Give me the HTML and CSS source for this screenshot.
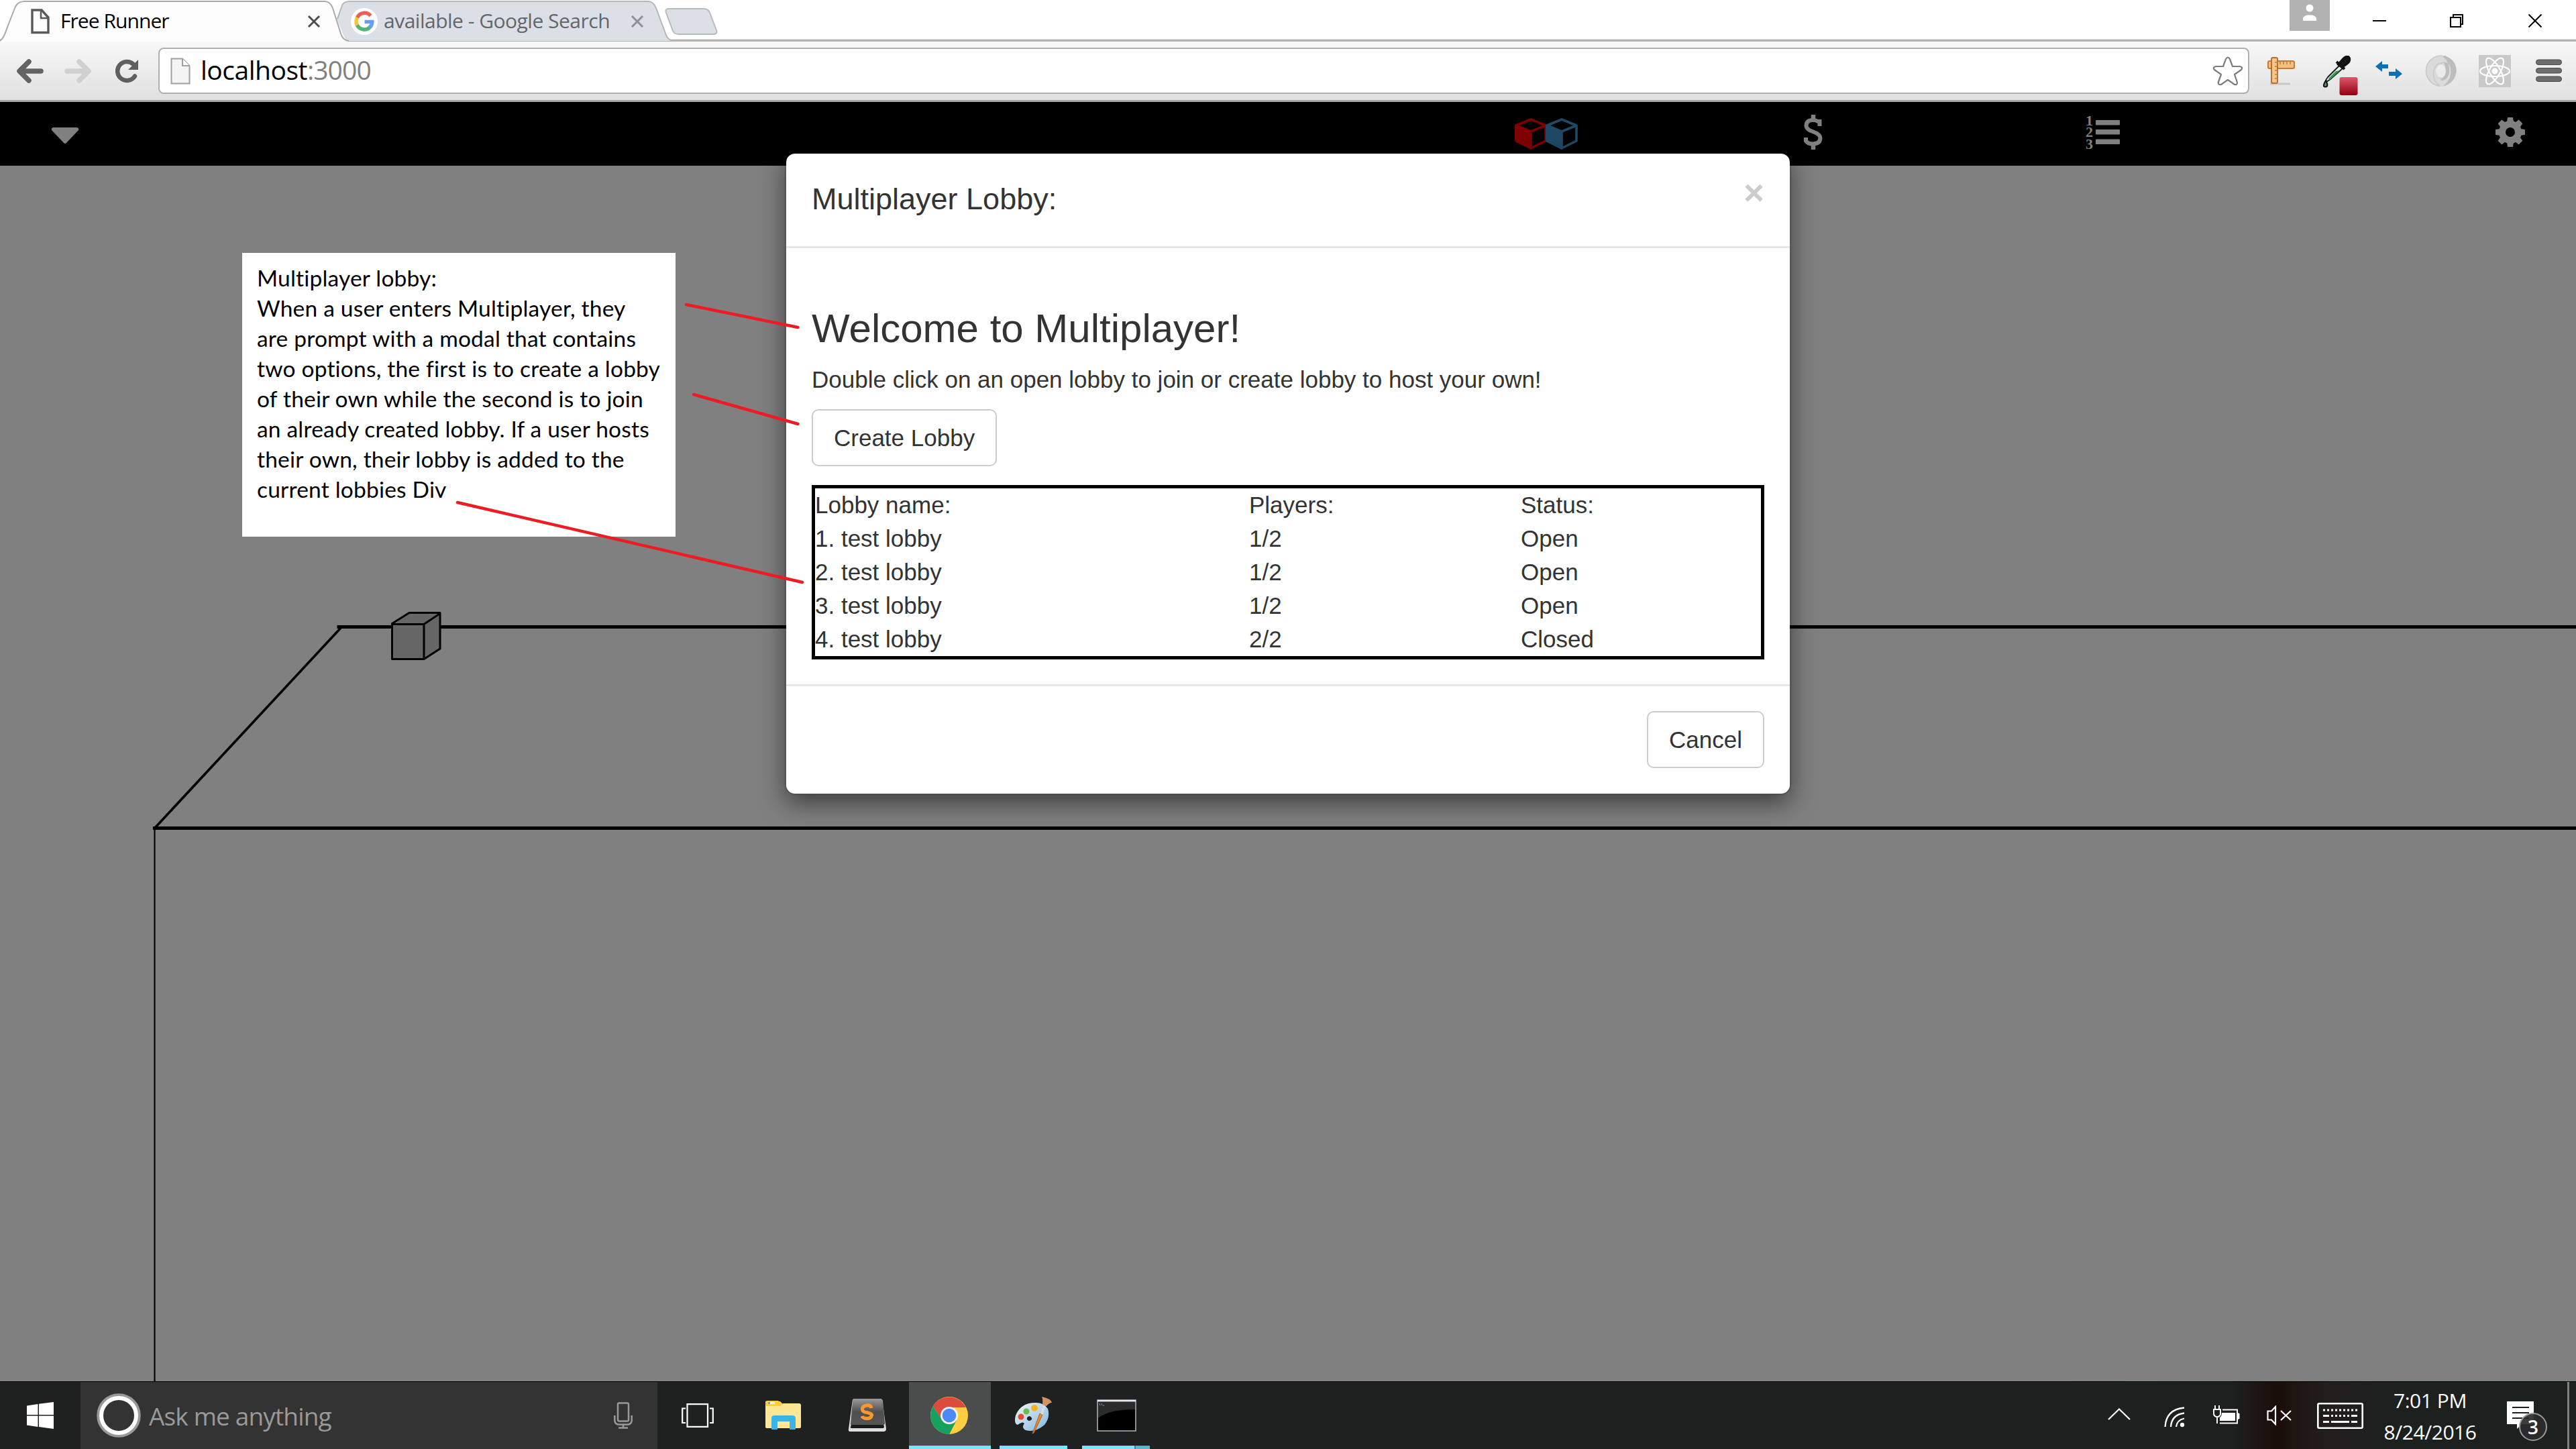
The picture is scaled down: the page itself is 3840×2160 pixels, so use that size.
FILE: index.html
```html
<!DOCTYPE html>
<html lang="en">
<head>
<meta charset="utf-8">
<title>Free Runner</title>
<link rel="stylesheet" href="styles.css">
</head>
<body>
<div class="desktop">

  <header class="tabstrip">
    <div class="tab tab-active">
      <svg class="tab-shape" width="530" height="62" viewBox="0 0 530 62"><path d="M-2 62C6 58 8 48 12 38L22 12Q26 2 36 2H484Q492 2 496 12L508 50Q511 60 520 61V62Z" fill="#fdfdfd"/><path d="M-2 62C6 58 8 48 12 38L22 12Q26 2 36 2H484Q492 2 496 12L508 50Q511 60 520 61" fill="none" stroke="#a9a9a9" stroke-width="2"/></svg>
      <svg class="tab-page" width="28" height="38" viewBox="0 0 28 38" fill="none" stroke="#5a5a5a" stroke-width="3.4"><path d="M2 2H16L26 13V35.500H2Z"/><path d="M15 2V14H26" stroke-width="2.500"/></svg>
      <span class="tab-title tight">Free Runner</span>
      <svg class="tab-close" width="20" height="20" viewBox="0 0 20 20" stroke="#4d4d4d" stroke-width="3"><path d="M2 2L18 18M18 2L2 18"/></svg>
    </div>
    <div class="tab tab-second">
      <svg class="tab-shape" width="505" height="62" viewBox="0 0 505 62"><path d="M0 28L8 8Q10 2 20 2H464Q472 2 476 12L490 50Q493 60 502 61H18Q12 60 9 50Z" fill="#dbdfe6"/><path d="M1 28L8 8Q10 2 20 2H464Q472 2 476 12L490 50Q493 60 502 61" fill="none" stroke="#b4b6b9" stroke-width="2"/></svg>
      <svg class="google" width="40" height="40" viewBox="0 0 40 40" fill="none"><circle cx="20" cy="20" r="20" fill="#fff"/><g stroke-width="5.500"><path d="M29.500 11.500A12 12 0 0 0 9.400 14.500" stroke="#ea5f55"/><path d="M9.600 14A12.500 12.500 0 0 0 9.600 26" stroke="#fbc32d"/><path d="M9.400 25.500A12 12 0 0 0 28.500 28.500" stroke="#53b573"/><path d="M28 29Q32 25 31.800 20.500H20.500" stroke="#6b9cf3"/></g></svg>
      <span class="tab-title">available - Google Search</span>
      <svg class="tab-close" width="20" height="20" viewBox="0 0 20 20" stroke="#8d8f92" stroke-width="3"><path d="M2 2L18 18M18 2L2 18"/></svg>
    </div>
    <svg class="newtab" width="82" height="42" viewBox="0 0 82 42"><path d="M7 2H59Q66 2 68 8L78 34Q80 40 73 40H22Q15 40 13 35L3 8Q1 2 7 2Z" fill="#dbdfe6" stroke="#b9babd" stroke-width="2"/></svg>
    <div class="window-buttons">
      <div class="avatar"><svg width="20" height="28" viewBox="0 0 20 28" fill="#fff"><circle cx="10" cy="7" r="5.500"/><path d="M0 26V22Q2 18 7 17.500H13Q18 18 20 22V26Z"/></svg></div>
      <svg class="minimise" width="20" height="20" viewBox="0 0 20 20"><path d="M0 10H20" stroke="#000" stroke-width="2"/></svg>
      <svg class="restore" width="20" height="20" viewBox="0 0 20 20" fill="none" stroke="#000" stroke-width="2"><path d="M1 5H16V19H1ZM5 5V1H19V15H16"/></svg>
      <svg class="shut" width="20" height="20" viewBox="0 0 20 20" stroke="#000" stroke-width="2"><path d="M.5.5L19.500 19.500M19.500.5L.5 19.500"/></svg>
    </div>
  </header>

  <div class="toolbar">
    <svg class="back" width="42" height="36" viewBox="0 0 42 36" fill="none" stroke="#636363" stroke-width="7.500" stroke-linecap="round" stroke-linejoin="round"><path d="M19 4L5 18L19 32M6 18H37"/></svg>
    <svg class="forward" width="42" height="36" viewBox="0 0 42 36" fill="none" stroke="#d0d0d0" stroke-width="7.500" stroke-linecap="round" stroke-linejoin="round"><path d="M23 4L37 18L23 32M36 18H5"/></svg>
    <svg class="reload" width="38" height="36" viewBox="0 0 38 36"><path d="M30 25.500A14 14 0 1 1 28 8" fill="none" stroke="#5f5f5f" stroke-width="6.500" stroke-linecap="round"/><path d="M35 1V16H20Z" fill="#5f5f5f"/></svg>
    <div class="omnibox">
      <svg width="30" height="40" viewBox="0 0 30 40" fill="#f4f4f5" stroke="#a0a0a0" stroke-width="2"><path d="M1.500 1.500H18L28.500 12V38.500H1.500Z"/><path d="M18 1.500V12H28.500" fill="#fff"/></svg>
      <span class="url">localhost<span class="port">:3000</span></span>
      <svg class="star" width="46" height="44" viewBox="0 0 46 44" fill="#fff" stroke="#7d7d7d" stroke-width="2.200" stroke-linejoin="round"><path d="M20 4Q23 -1 26 4L30 15H41Q46 16 43 20L33 27L37 39Q37 43 33 42L23 35L13 42Q8 43 9 38L13 27L3 20Q0 16 5 15H16Z"/></svg>
    </div>
    <svg class="ext ruler" width="42" height="42" viewBox="0 0 42 42"><path d="M4 40H34" stroke="#c8c8c8" stroke-width="3"/><rect x="1" y="6" width="39" height="11" rx="2" fill="#f5bf83" stroke="#c77a34" stroke-width="2"/><rect x="6" y="1" width="9" height="38" rx="2" fill="#f8c68d" stroke="#bd702c" stroke-width="2"/><path d="M11 8H15M11 14H15M11 20H15M11 26H15M11 32H15M19 7V11M24 7V11M29 7V11M34 7V11" stroke="#c07c3a" stroke-width="1.500"/></svg>
    <svg class="ext dropper" width="53" height="60" viewBox="0 0 53 60"><path d="M26 14L8 32Q4 37 6 39L12 35L30 19" fill="#e8eee9" stroke="#222" stroke-width="2"/><path d="M20 23L9 34L11 36L26 22Z" fill="#2d9a4d"/><path d="M21 9L33 20M24 13L32 4Q38 -1 40 4Q41 9 36 12L29 17Z" fill="#161616" stroke="#111" stroke-width="4"/><path d="M5 37Q-1 47 4.500 46.500Q10 46 5 37Z" fill="#4f9a5f" stroke="#111" stroke-width="2"/><defs><linearGradient id="red" x2="0" y2="1"><stop stop-color="#e0566a"/><stop offset="1" stop-color="#8d0010"/></linearGradient></defs><rect x="25.500" y="32" width="27" height="27" rx="3" fill="url(#red)"/></svg>
    <svg class="ext swap" width="42" height="30" viewBox="0 0 42 30" fill="#0c70b4"><path d="M1 8L11 0V5H20V11H11V16ZM41 19L31 11V16H21V22H31V27Z"/></svg>
    <svg class="ext ring" width="48" height="48" viewBox="0 0 48 48" fill="none"><circle cx="24" cy="24" r="15.500" stroke="#dadada" stroke-width="15"/><path d="M26 1A22.500 22.500 0 0 0 22 46Q10 38 13 23Q16 12 26 11Q20 17 20 25Q20 33 27 38" stroke="#c9c9c9" stroke-width="1.500"/><path d="M30 1Q47 8 46.500 24Q44 42 27 46.500Q41 35 38 19Q36 11 27 10Q31 16 30 24Q29 32 23 38Q34 38 36 26Q37 10 26 2Z" fill="#bdbdbd"/><ellipse cx="24" cy="24" rx="7" ry="10" fill="#ebebeb"/></svg>
    <svg class="ext react" width="48" height="48" viewBox="0 0 48 48"><rect width="48" height="48" fill="#c9c9c9"/><g fill="none" stroke="#fff" stroke-width="2.200"><ellipse cx="24" cy="24" rx="22" ry="8"/><ellipse cx="24" cy="24" rx="22" ry="8" transform="rotate(60 24 24)"/><ellipse cx="24" cy="24" rx="22" ry="8" transform="rotate(120 24 24)"/></g><circle cx="24" cy="24" r="4.500" fill="#fff"/></svg>
    <svg class="ext menu" width="39" height="36" viewBox="0 0 39 36" fill="#6d6d6d" stroke="#4b4b4b" stroke-width="1"><rect x=".5" y="1" width="38" height="7.500" rx="3.500"/><rect x=".5" y="13.500" width="38" height="7.500" rx="3.500"/><rect x=".5" y="26" width="38" height="7.500" rx="3.500"/></svg>
  </div>

  <nav class="navbar">
    <svg class="caret" width="42" height="24" viewBox="0 0 42 24"><path d="M3 0H39Q42 1 41 4L23 23Q21 25 19 23L1 4Q0 1 3 0Z" fill="#808080"/></svg>
    <svg class="cubes" width="94" height="48" viewBox="0 0 94 48"><g stroke-width="3.600" stroke-linejoin="round"><path d="M2 11L24 2L46 11V34L24 45L2 34Z" fill="none" stroke="#800000"/><path d="M2 11L24 20V45L2 34Z" fill="#800000" stroke="#800000"/><path d="M24 20L46 11" stroke="#800000"/><path d="M48 11L70 2L92 11V34L70 45L48 34Z" fill="none" stroke="#1f4a66"/><path d="M48 11L70 20V45L48 34Z" fill="#1f4a66" stroke="#1f4a66"/><path d="M70 20L92 11" stroke="#1f4a66"/></g></svg>
    <svg class="dollar" width="28" height="52" viewBox="0 0 28 52" fill="none" stroke="#808080"><path d="M23.500 17V10H21Q18 8 13.500 8Q4 8 3.500 16Q3.500 22 13 25Q24.500 29 24.500 35Q24 43.500 13 43.500Q6 43.500 3 39V34" stroke-width="6"/><path d="M14 0V9M14 43V52" stroke-width="6.500"/></svg>
    <div class="ranking">
      <div class="digits"><span>1</span><span>2</span><span>3</span></div>
      <svg width="36" height="36" viewBox="0 0 36 36" fill="#808080"><rect width="36" height="7.500" rx="1"/><rect y="14" width="36" height="7.500" rx="1"/><rect y="28.500" width="36" height="7.500" rx="1"/></svg>
    </div>
    <svg class="gear" width="44" height="44" viewBox="-22 -22 44 44"><circle r="12" fill="none" stroke="#808080" stroke-width="10"/><g fill="#808080"><path id="tooth" d="M-5 -15L-4 -22H4L5 -15Z"/><use href="#tooth" transform="rotate(45)"/><use href="#tooth" transform="rotate(90)"/><use href="#tooth" transform="rotate(135)"/><use href="#tooth" transform="rotate(180)"/><use href="#tooth" transform="rotate(225)"/><use href="#tooth" transform="rotate(270)"/><use href="#tooth" transform="rotate(315)"/></g></svg>
  </nav>

  <main class="scene">
    <svg width="3840" height="1812" viewBox="0 247 3840 1812" fill="none" stroke="#000">
      <path d="M502.500 934.500H3840M228 1234.500H3840" stroke-width="5"/>
      <path d="M508 936L231 1234" stroke-width="3.600"/>
      <path d="M230.500 1235V2059" stroke-width="2.200"/>
      <g fill="#666" stroke-width="3" stroke-linejoin="round"><path d="M584.500 929.500L610 913.500H656V967L632 982.500H584.500Z"/><path d="M584.500 930.500H632V982.500M632 930.500L656 914.500"/></g>
    </svg>
  </main>

  <footer class="taskbar">
    <div class="start"><svg width="40" height="40" viewBox="0 0 40 40" fill="#fff"><path d="M0 5.500L16.500 3V19H0ZM18 2.800L40 0V19H18ZM0 20.500H16.500V37L0 34.500ZM18 20.500H40V40L18 37Z"/></svg></div>
    <div class="search">
      <svg width="66" height="66" viewBox="0 0 66 66" fill="none"><circle cx="33" cy="33" r="30.500" stroke="#999" stroke-width="4.500"/><circle cx="33" cy="33" r="26" stroke="#fff" stroke-width="6"/></svg>
      <span class="ask">Ask me anything</span>
      <svg class="mic" width="28" height="40" viewBox="0 0 28 40" fill="none" stroke="#999" stroke-width="2.500"><rect x="6" y="1.500" width="16" height="27" rx="2"/><path d="M1.300 20V28Q2 33.500 8 33.500H20Q26 33.500 26.700 28V20M14 34V38M7 38.500H21"/></svg>
    </div>
    <div class="app taskview"><svg width="48" height="36" viewBox="0 0 48 36" fill="none" stroke="#fff" stroke-width="2.200"><path d="M8.500 1.200H39V34.800H8.500ZM6 7.500H1.200V29H6M42 7.500H46.800V29H42"/></svg></div>
    <div class="app folder"><svg width="54" height="46" viewBox="0 0 54 46"><path d="M0 3Q0 1 3 1H19L26 8H0Z" fill="#ffce3d"/><path d="M0 9H21L26 5H50Q53 5 53 8V40Q53 42 51 42H3Q0 42 0 40Z" fill="#ffe693"/><path d="M0 9H21L26 6L22 2H0Z" fill="#ffce3d"/><path d="M4 4.500H14" stroke="#fff" stroke-width="2.500"/><path d="M4 4.500H7" stroke="#27b1c7" stroke-width="2.500"/><path d="M9 44V27Q9 23 14 23H40Q45 23 45 27V44H36V32H18V44Z" fill="#3bb3e6"/></svg></div>
    <div class="app sublime"><svg width="58" height="52" viewBox="0 0 58 52"><defs><linearGradient id="key" x2="0" y2="1"><stop stop-color="#9a9a9a"/><stop offset=".5" stop-color="#505050"/><stop offset="1" stop-color="#555"/></linearGradient></defs><path d="M7 2H51L57 46Q57 50 53 50H4Q0 50 1 46Z" fill="#dedede"/><path d="M5 39H53L54 43Q54 45 52 45H6Q3 45 4 43Z" fill="#1b1b1b"/><path d="M9 1H49Q51 1 52 4L55 38Q55 40 52 40H6Q3 40 4 38L7 4Q7 1 9 1Z" fill="url(#key)"/><path d="M35 15Q34 10 28 11Q21 12 21.500 17Q22 21 28 21.500Q36 23 35.500 26Q34 31 28 30.500Q22 30 21 27" fill="none" stroke="#ff962e" stroke-width="5"/></svg></div>
    <div class="app chrome"><svg width="56" height="56" viewBox="-28 -28 56 56"><circle r="28" fill="#ffcd41"/><path d="M0 0L-24.200 -14A28 28 0 0 1 24.300 -12H0Z" fill="#dd4b3e"/><path d="M-24.200 -14A28 28 0 0 0 0 28L11 7L0 0L-11 6Z" fill="#17a15f"/><path d="M-24.200 -14L-11 6L0 -13H24.200A28 28 0 0 0 -24.200 -14Z" fill="#dd4b3e"/><path d="M0 28L11 6L0 12Z" fill="#17a15f"/><circle r="13" fill="#f4f4f4"/><circle r="10.300" fill="#4b8af4"/></svg><i class="underline"></i></div>
    <div class="app paint"><svg width="56" height="56" viewBox="0 0 56 56"><defs><linearGradient id="pal" x2="1" y2="1"><stop stop-color="#f2f7fb"/><stop offset="1" stop-color="#7cb6dc"/></linearGradient></defs><path d="M32 9Q9 9 2 28Q-1 40 5 42Q13 36 15 40Q10 46 17 50Q31 54 45 42Q54 31 50 18Q44 9 32 9ZM23 29Q27 31 26 34Q22 38 19 34Q18 30 23 29Z" fill="url(#pal)" fill-rule="evenodd"/><circle cx="10" cy="30" r="4.500" fill="#e8492f"/><circle cx="18" cy="22" r="4.500" fill="#6bbd45"/><circle cx="30" cy="17" r="5" fill="#fdb022"/><path d="M27 55L38 25L42 27L29 54Z" fill="#e98b2a" stroke="#b15e13"/><path d="M39 25L43 12L47 14L42 27Z" fill="#d5dde3"/><path d="M42 12Q43 4 41 0Q55 3 56 9Q52 9 48 14Z" fill="#ce9461"/></svg><i class="underline"></i></div>
    <div class="app cmd"><svg width="59" height="48" viewBox="0 0 59 48"><rect x="1" y="1" width="57" height="46" fill="#000" stroke="#a9afb8" stroke-width="1.600"/><path d="M2 28Q18 15 57 15V4H2Z" fill="#2b2b2b"/><path d="M1 2.200H58" stroke="#e8eaee" stroke-width="2.600"/><path d="M4 6L5 9M7 6L8 9M9 9H11" stroke="#aaa" stroke-width=".8"/></svg><i class="underline"></i></div>
    <div class="tray">
      <svg class="chevron" width="34" height="18" viewBox="0 0 34 18" fill="none" stroke="#fff" stroke-width="2.200"><path d="M1 17L17 1.500L33 17"/></svg>
      <svg class="wifi" width="31" height="31" viewBox="0 0 31 31" fill="none" stroke="#fff" stroke-width="2.300"><path d="M1.500 30Q3 4 30 1.500M10 30Q11 12 30 9.500M18 30Q19 20 30 17.500"/><circle cx="27" cy="27" r="2" fill="#fff"/></svg>
      <svg class="battery" width="40" height="28" viewBox="0 0 40 28" fill="none" stroke="#fff" stroke-width="2"><path d="M14 6.500H36V26.500H10M37 11V21"/><path d="M13 11H33V23H10V18Q13 16 13 11Z" fill="#fff" stroke="none"/><path d="M38 12V20" stroke-width="3"/><path d="M3 0V6M9 0V6M1 6H11V13Q10 17 6 17Q2 17 1 13ZM6 17V27"/></svg>
      <svg class="mute" width="37" height="30" viewBox="0 0 37 30" fill="none" stroke="#fff" stroke-width="2.200"><path d="M1.500 8.500H7L13 2V28L7 21.500H1.500ZM21 8L36 22M36 8L21 22"/></svg>
      <svg class="keyboard" width="69" height="39" viewBox="0 0 69 39" fill="none" stroke="#fff" stroke-width="2.600"><rect x="1.300" y="1.300" width="66.400" height="36.400" rx="2"/><path d="M9 11H60" stroke-width="3" stroke-dasharray="3 3"/><path d="M9 19.500H18M51 19.500H60" stroke-width="3"/><path d="M21 19.500H48" stroke-width="3" stroke-dasharray="3 3"/><path d="M9 28.500H18M21 28.500H48M51 28.500H60" stroke-width="3"/></svg>
      <div class="clock"><span>7:01 PM</span><span>8/24/2016</span></div>
      <div class="notify">
        <svg width="42" height="42" viewBox="0 0 42 42"><path d="M0 0H40V34H22L15 41V34H0Z" fill="#fff"/><path d="M8 9H33M8 17H33M8 25H33" stroke="#1c201f" stroke-width="2"/></svg>
        <span class="badge">3</span>
      </div>
      <div class="show-desktop"></div>
    </div>
  </footer>

  <section class="modal">
    <div class="modal-header"><h4>Multiplayer Lobby:</h4><span class="dismiss">×</span></div>
    <div class="modal-body">
      <h3>Welcome to Multiplayer!</h3>
      <p>Double click on an open lobby to join or create lobby to host your own!</p>
      <button class="btn">Create Lobby</button>
      <div class="lobbies">
        <span>Lobby name:</span><span>Players:</span><span>Status:</span>
        <span>1. test lobby</span><span>1/2</span><span>Open</span>
        <span>2. test lobby</span><span>1/2</span><span>Open</span>
        <span>3. test lobby</span><span>1/2</span><span>Open</span>
        <span>4. test lobby</span><span>2/2</span><span>Closed</span>
      </div>
    </div>
    <div class="modal-footer"><button class="btn">Cancel</button></div>
  </section>

  <aside class="note">Multiplayer lobby:<br>When a user enters Multiplayer, they<br>are prompt with a modal that contains<br>two options, the first is to create a lobby<br>of their own while the second is to join<br>an already created lobby. If a user hosts<br>their own, their lobby is added to the<br>current lobbies Div</aside>
  <svg class="pointers" width="3840" height="2160" viewBox="0 0 3840 2160" stroke="#ed1c24" stroke-width="4.500" stroke-linecap="round"><path d="M1023 454L1189.500 488M1034 588L1189.500 632M682 749L1196 868"/></svg>
</div>
</body>
</html>
```
FILE: styles.css
```css
* { box-sizing: border-box; }
body { margin: 0; }
svg { display: block; flex: none; }

.desktop {
  position: relative;
  display: flex;
  flex-direction: column;
  width: 3840px;
  height: 2160px;
  overflow: hidden;
  background: #808080;
  font-family: "Open Sans", sans-serif;
}

/* browser tabs */
.tabstrip {
  display: flex;
  height: 62px;
  background: linear-gradient(#fff 0 58px, #e4e4e4 58px 59px, #b4b4b4 59px 62px);
}
.tab {
  position: relative;
  display: flex;
  align-items: flex-start;
  height: 62px;
}
.tab > * { position: relative; }
.tab .tab-shape { position: absolute; left: 0; top: 0; }
.tab-active { width: 502px; padding-left: 46px; z-index: 1; }
.tab-second { width: 489px; padding-left: 21px; }
.tab-page { margin-top: 13px; }
.tab-title {
  margin-top: 10px;
  font-size: 30px;
  line-height: 41px;
  letter-spacing: -0.5px;
  white-space: nowrap;
  color: #000;
}
.tab-active .tab-title { margin-left: 16px; letter-spacing: -0.95px; width: 368px; }
.google { margin-top: 12px; }
.tab-second .tab-title { margin-left: 9px; width: 368px; color: #63666a; }
.tab-close { margin-top: 22px; }
.newtab { margin-top: 11px; margin-left: -1px; }

.window-buttons { display: flex; margin-left: auto; padding-right: 51px; }
.avatar {
  display: flex;
  justify-content: center;
  width: 60px;
  height: 46px;
  padding-top: 5px;
  background: #b2b2b2;
}
.window-buttons > svg { margin-top: 21px; }
.minimise { margin-left: 64px; }
.restore { margin-left: 95px; }
.shut { margin-left: 97px; }

/* address bar */
.toolbar {
  display: flex;
  align-items: center;
  height: 90px;
  padding: 0 21px 3px 24px;
  background: linear-gradient(#f8f8f8, #e0e0e0 87px, #a6a6a6 87px);
}
.forward { margin-left: 29px; }
.reload { margin-left: 34px; }
.omnibox {
  display: flex;
  align-items: center;
  width: 3117px;
  height: 69px;
  margin-left: 27px;
  padding: 0 7px 0 16px;
  border: 2px solid #b0b0b0;
  border-radius: 8px;
  background: #fff;
}
.url {
  margin: -3px 0 0 15px;
  font-size: 39px;
  line-height: 60px;
  letter-spacing: -0.5px;
}
.port { color: #808080; letter-spacing: -0.9px; }
.star { margin-left: auto; }
.ruler { margin-left: 27px; }
.dropper { margin: 14px 0 0 40px; }
.swap { margin-left: 25px; }
.ring { margin-left: 33px; }
.react { margin-left: 32px; }
.menu { margin-left: 37px; }

/* game navigation */
.navbar {
  display: flex;
  align-items: center;
  height: 95px;
  padding: 0 76px;
  background: #000;
}
.caret { margin-top: 4px; }
.cubes { margin-left: 2140px; margin-top: 1px; }
.dollar { margin-left: 337px; margin-top: -5px; }
.ranking { display: flex; align-items: center; margin-left: 392px; margin-top: -5px; }
.digits {
  display: flex;
  flex-direction: column;
  width: 15px;
  font: bold 22px/17.5px "Liberation Serif", serif;
  color: #808080;
}
.gear { margin-left: auto; margin-top: -5px; }
.scene { flex: 1; min-height: 0; }

/* lobby dialog */
.modal {
  position: absolute;
  left: 1170px;
  top: 227px;
  width: 1500px;
  border: 2.5px solid rgba(0, 0, 0, 0.2);
  border-radius: 15px;
  background: #fff;
  background-clip: padding-box;
  box-shadow: 0 12.5px 37.5px rgba(0, 0, 0, 0.5);
  font-family: "Liberation Sans", Arial, sans-serif;
  font-size: 35px;
  line-height: 50px;
  color: #333;
}
.modal-header {
  display: flex;
  justify-content: space-between;
  height: 141px;
  padding: 37px 38px;
  border-bottom: 3px solid #e5e5e5;
}
h4 { margin: 0; font-size: 45px; line-height: 62px; }
h3 { margin: 0; font-size: 60px; line-height: 66px; }
h3, h4 { font-weight: normal; }
.dismiss { font-size: 52.5px; line-height: 52px; margin-top: -5px; font-weight: bold; color: #ccc; }
.modal-body { display: flex; flex-direction: column; align-items: flex-start; padding: 87px 38px 37px; }
p { margin: 18px 0 19px; }
.btn {
  height: 85px;
  padding: 0 31px;
  border: 2.5px solid #ccc;
  border-radius: 10px;
  background: #fff;
  font: inherit;
  color: #333;
}
.lobbies {
  display: grid;
  grid-template-columns: 647px 405px 1fr;
  width: 1420px;
  margin-top: 28px;
  border: 5px solid #000;
}
.modal-footer { display: flex; justify-content: flex-end; padding: 37px 38px 38px; border-top: 3px solid #e5e5e5; }

/* annotation */
.note {
  position: absolute;
  left: 361px;
  top: 377px;
  width: 646px;
  height: 423px;
  padding: 15px 0 0 22px;
  background: #fff;
  font: 33.5px/45px Lato, sans-serif;
  letter-spacing: 0.2px;
  white-space: nowrap;
  color: #000;
}
.pointers { position: absolute; left: 0; top: 0; }

/* taskbar */
.taskbar {
  display: flex;
  height: 101px;
  border-top: 1px solid #000;
  background: #1e2120;
}
.start { display: flex; align-items: center; justify-content: center; width: 120px; }
.search { display: flex; align-items: center; width: 860px; padding: 0 37px 0 24px; background: #333; }
.ask { margin-left: 12px; font-size: 37px; letter-spacing: -0.85px; color: #999; }
.mic { margin-left: auto; }
.app { position: relative; display: flex; align-items: center; justify-content: center; }
.taskview { width: 120px; }
.folder { width: 135px; }
.sublime { width: 120px; padding-right: 4px; }
.chrome { width: 122px; padding-right: 2px; background: #4b4c4c; }
.paint { width: 125px; }
.cmd { width: 124px; }
.underline { position: absolute; bottom: 0; left: 0; width: 100%; height: 5px; background: #76e5fd; }
.paint .underline { left: 13px; width: 101px; }
.cmd .underline { left: 11px; width: 101px; background: linear-gradient(90deg, #76e5fd 78px, #3f8290 78px 80px, #5cb2c6 80px); }
.tray {
  display: flex;
  align-items: center;
  width: 800px;
  margin-left: auto;
  padding-left: 102px;
  background: linear-gradient(90deg, #1e2120, #1c201f 290px, #1b0d09 355px, #1e1612 385px, #221e1e 430px, #1c201f 530px);
}
.chevron { margin-top: -4px; }
.wifi { margin-left: 50px; margin-top: 4px; }
.battery { margin-left: 42px; margin-top: -3px; }
.mute { margin-left: 40px; }
.keyboard { margin-left: 38px; }
.clock {
  display: flex;
  flex-direction: column;
  align-items: center;
  width: 199px;
  padding-top: 2px;
  font-size: 30px;
  line-height: 47px;
  letter-spacing: -0.45px;
  color: #fff;
}
.notify { position: relative; margin: 0 0 0 15px; width: 60px; }
.badge {
  position: absolute;
  left: 18px;
  top: 17px;
  width: 42px;
  height: 42px;
  border: 2px solid #999;
  border-radius: 50%;
  background: rgba(45, 45, 45, 0.92);
  font-size: 28px;
  font-weight: 600;
  line-height: 38px;
  text-align: center;
  color: #fff;
}
.show-desktop { width: 3px; height: 100px; margin-left: 30px; background: #808080; }
```
